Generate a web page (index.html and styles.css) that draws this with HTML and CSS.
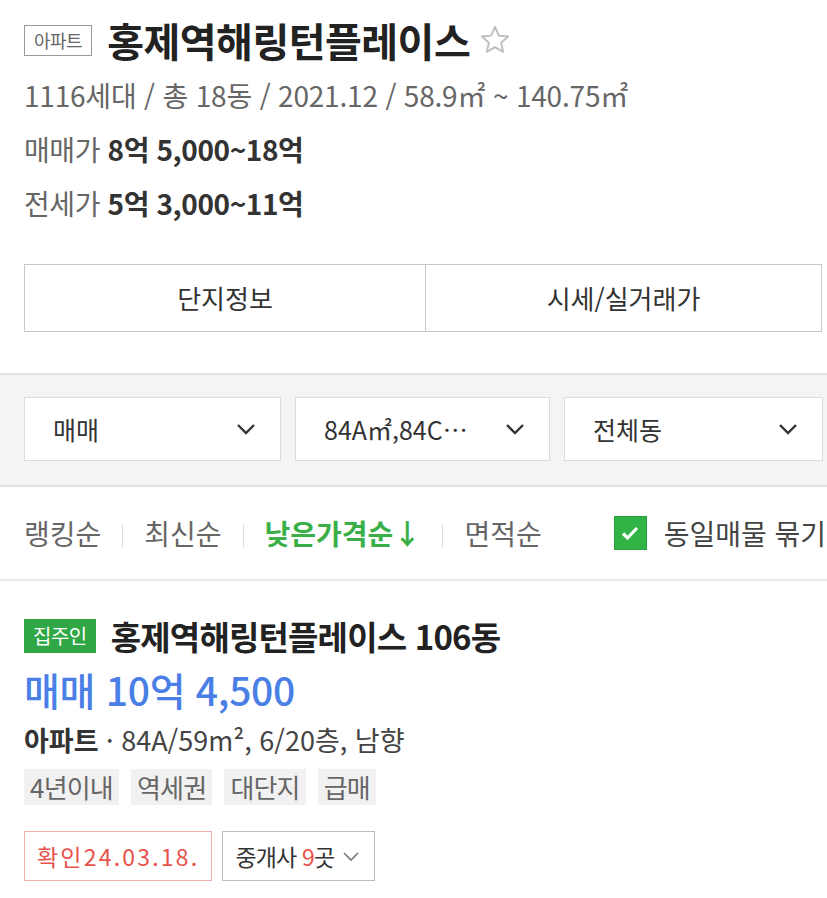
FILE: index.html
```html
<!DOCTYPE html>
<html lang="ko">
<head>
  <meta charset="UTF-8">
  <title>홍제역해링턴플레이스</title>
  <link rel="stylesheet" href="styles.css">
</head>
<body>

<div class="complex">
  <div class="title-row">
    <span class="type-badge">아파트</span>
    <h1 class="complex-name">홍제역해링턴플레이스</h1>
    <!-- 관심단지 별 -->
    <svg class="star" width="34" height="34" viewBox="0 0 24 24">
      <path d="M12 2.8l2.7 6.1 6.6.6-5 4.4 1.5 6.5L12 17l-5.8 3.4 1.5-6.5-5-4.4 6.6-.6z" fill="none" stroke="#bdbdbd" stroke-width="1.3" stroke-linejoin="round"/>
    </svg>
  </div>
  <p class="meta">1116세대 / 총 18동 / 2021.12 / 58.9㎡ ~ 140.75㎡</p>
  <p class="price-line"><span class="label">매매가</span> <b>8억 5,000~18억</b></p>
  <p class="price-line"><span class="label">전세가</span> <b>5억 3,000~11억</b></p>

  <div class="tabs">
    <a href="javascript:;" class="tab">단지정보</a>
    <a href="javascript:;" class="tab">시세/실거래가</a>
  </div>
</div>

<div class="filter-bar">
  <div class="select">
    <span>매매</span>
    <svg class="chevron" width="20" height="12" viewBox="0 0 20 12"><path d="M2 2l8 8 8-8" fill="none" stroke="#333" stroke-width="2.4"/></svg>
  </div>
  <div class="select">
    <span>84A㎡,84C…</span>
    <svg class="chevron" width="20" height="12" viewBox="0 0 20 12"><path d="M2 2l8 8 8-8" fill="none" stroke="#333" stroke-width="2.4"/></svg>
  </div>
  <div class="select">
    <span>전체동</span>
    <svg class="chevron" width="20" height="12" viewBox="0 0 20 12"><path d="M2 2l8 8 8-8" fill="none" stroke="#333" stroke-width="2.4"/></svg>
  </div>
</div>

<div class="sort-row">
  <a href="javascript:;" class="sort">랭킹순</a>
  <a href="javascript:;" class="sort">최신순</a>
  <a href="javascript:;" class="sort sort-on">낮은가격순↓</a>
  <a href="javascript:;" class="sort">면적순</a>
  <label class="bundle">
    <span class="check">
      <svg width="22" height="22" viewBox="0 0 22 22"><path d="M4 11.5l4.5 4.5 9.5-10" fill="none" stroke="#fff" stroke-width="3.2"/></svg>
    </span>
    동일매물 묶기
  </label>
</div>

<div class="item">
  <div class="item-title">
    <span class="owner">집주인</span>
    <span class="item-name">홍제역해링턴플레이스 106동</span>
  </div>
  <p class="item-price">매매 10억 4,500</p>
  <p class="item-spec"><b>아파트</b> · 84A/59m², 6/20층, 남향</p>
  <ul class="tags">
    <li>4년이내</li>
    <li>역세권</li>
    <li>대단지</li>
    <li>급매</li>
  </ul>
  <div class="item-bottom">
    <span class="confirm">확인24.03.18.</span>
    <a href="javascript:;" class="agent">
      <span>중개사 <em>9</em>곳</span>
      <svg width="18" height="11" viewBox="0 0 18 11"><path d="M2 2l7 7 7-7" fill="none" stroke="#777" stroke-width="1.6"/></svg>
    </a>
  </div>
</div>

</body>
</html>
```

FILE: styles.css
```css
* {
  margin: 0;
  padding: 0;
  list-style: none;
  box-sizing: border-box;
}
body {
  font-family: "Noto Sans CJK KR", "Noto Sans", sans-serif;
  color: #333;
  background: #fff;
}
a {
  text-decoration: none;
  color: inherit;
}

/* 단지 정보 */
.complex {
  padding: 20px 5px 0 24px;
}
.title-row {
  display: flex;
  align-items: center;
  height: 40px;
}
.type-badge {
  height: 31px;
  line-height: 28px;
  padding: 0 9px;
  border: 1px solid #9a9a9a;
  color: #666;
  font-size: 18px;
  letter-spacing: -0.5px;
}
.complex-name {
  margin-left: 15px;
  font-size: 40px;
  line-height: 40px;
  font-weight: bold;
  color: #222;
  letter-spacing: -0.5px;
}
.star {
  margin-left: 8px;
}
.meta {
  margin-top: 15px;
  font-size: 28px;
  line-height: 40px;
  color: #666;
  letter-spacing: -0.2px;
}
.price-line {
  margin-top: 14px;
  font-size: 28px;
  line-height: 40px;
  letter-spacing: -0.4px;
}
.price-line .label {
  color: #666;
}
.price-line b {
  color: #333;
  font-weight: bold;
}
.tabs {
  display: grid;
  grid-template-columns: 400px 1fr;
  margin-top: 41px;
  border: 1px solid #c8c8c8;
}
.tab {
  height: 66px;
  line-height: 66px;
  text-align: center;
  font-size: 26px;
  color: #333;
}
.tab + .tab {
  border-left: 1px solid #c8c8c8;
}

/* 필터 */
.filter-bar {
  display: grid;
  grid-template-columns: 257px 255px 259px;
  column-gap: 14px;
  margin-top: 41px;
  padding: 22px 5px 24px 24px;
  background: #f4f4f4;
  border-top: 2px solid #e2e2e2;
  border-bottom: 2px solid #e2e2e2;
}
.select {
  display: flex;
  align-items: center;
  justify-content: space-between;
  height: 64px;
  padding: 0 24px 0 28px;
  background: #fff;
  border: 1px solid #dcdcdc;
  font-size: 25px;
  color: #333;
}

/* 정렬 */
.sort-row {
  display: flex;
  align-items: center;
  height: 94px;
  padding-left: 24px;
  border-bottom: 2px solid #e8e8e8;
  white-space: nowrap;
  overflow: hidden;
}
.sort {
  font-size: 28px;
  color: #666;
}
.sort + .sort::before {
  content: "";
  display: inline-block;
  width: 1px;
  height: 22px;
  margin: 0 21px;
  background: #ddd;
  vertical-align: -2px;
}
.sort-on {
  color: #3aaf47;
  font-weight: bold;
}
.bundle {
  display: flex;
  align-items: center;
  margin-left: 72px;
  font-size: 28px;
  color: #444;
}
.check {
  display: flex;
  align-items: center;
  justify-content: center;
  width: 33px;
  height: 34px;
  margin-right: 17px;
  background: #31b346;
  border: 1px solid #27a03a;
}

/* 매물 */
.item {
  padding: 38px 0 0 24px;
}
.item-title {
  display: flex;
  align-items: center;
  height: 34px;
}
.owner {
  height: 34px;
  line-height: 34px;
  padding: 0 9px;
  background: #2fa744;
  color: #fff;
  font-size: 20px;
  letter-spacing: -0.5px;
}
.item-name {
  margin-left: 15px;
  font-size: 33px;
  line-height: 34px;
  font-weight: bold;
  color: #222;
  letter-spacing: -0.8px;
}
.item-price {
  margin-top: 14px;
  font-size: 39px;
  line-height: 44px;
  font-weight: 500;
  color: #4a80e6;
  letter-spacing: -0.3px;
}
.item-spec {
  margin-top: 11px;
  font-size: 27px;
  line-height: 36px;
  color: #444;
}
.item-spec b {
  color: #333;
}
.tags {
  display: flex;
  gap: 12px;
  margin-top: 11px;
}
.tags li {
  height: 36px;
  line-height: 36px;
  padding: 0 6px;
  background: #f1f1f1;
  color: #666;
  font-size: 26px;
  letter-spacing: -0.8px;
}
.item-bottom {
  display: flex;
  gap: 10px;
  margin-top: 26px;
}
.confirm {
  height: 50px;
  line-height: 48px;
  padding: 0 12px;
  border: 1px solid #f2b0ad;
  color: #e9524a;
  font-size: 23px;
  letter-spacing: 2.2px;
}
.agent {
  display: flex;
  align-items: center;
  gap: 8px;
  height: 50px;
  padding: 0 14px 0 12px;
  border: 1px solid #bdbdbd;
  color: #333;
  font-size: 23px;
  letter-spacing: -0.8px;
}
.agent em {
  font-style: normal;
  color: #e9524a;
}
```
